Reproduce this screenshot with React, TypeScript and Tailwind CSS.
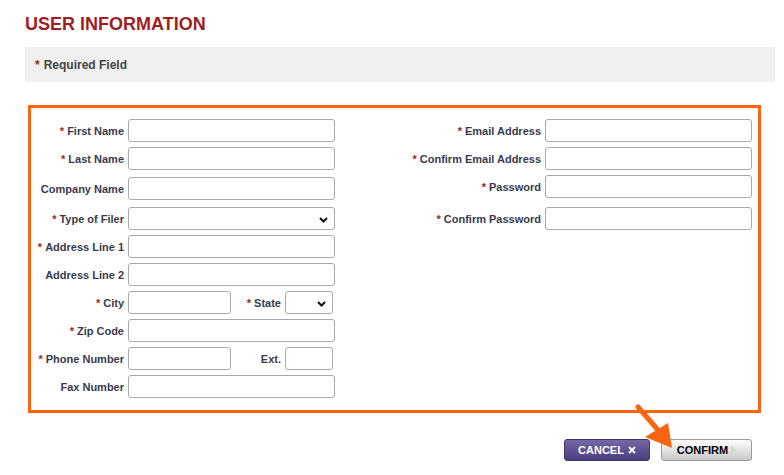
import React from "react"

const inputCls = "h-[23px] border border-[#a9a9a9] rounded-[3px] bg-white"

function Star() {
  return <span className="text-[#a31c22] mr-[3px]">*</span>
}

function Label({ text, req, w }: { text: string; req?: boolean; w: string }) {
  return (
    <div className={`${w} pr-[4px] text-right text-[11px] font-bold text-[#3a3a4c] leading-[14px] whitespace-nowrap`}>
      {req && <Star />}
      {text}
    </div>
  )
}

function Chevron() {
  return (
    <svg className="absolute right-[6px] top-[9px]" width="9" height="6" viewBox="0 0 9 6">
      <path d="M1 1 L4.5 4.5 L8 1" stroke="#111" strokeWidth="2" fill="none" />
    </svg>
  )
}

function Select({ w }: { w: string }) {
  return (
    <div className={`relative ${w} ${inputCls}`}>
      <Chevron />
    </div>
  )
}

function Row({ label, req, mt, children }: { label: string; req?: boolean; mt: string; children?: React.ReactNode }) {
  return (
    <div className={`flex items-center ${mt}`}>
      <Label text={label} req={req} w="w-[97px]" />
      {children ?? <input className={`w-[207px] ${inputCls}`} />}
    </div>
  )
}

function RightRow({ label, mt }: { label: string; mt: string }) {
  return (
    <div className={`flex items-center ${mt}`}>
      <Label text={label} req w="w-[155px]" />
      <input className={`w-[207px] ${inputCls}`} />
    </div>
  )
}

export default function App() {
  return (
    <div className="relative w-[784px] h-[475px] bg-white pl-[25px] pt-[13px]" style={{ fontFamily: '"Liberation Sans", Arial, sans-serif' }}>
      <h1 className="text-[18px] leading-[22px] font-bold text-[#a31c22]">USER INFORMATION</h1>

      <div className="mt-[12px] w-[750px] h-[35px] bg-[#f0f0f0] flex items-center pl-[10px] text-[12px] font-bold text-[#444]">
        <span className="text-[#a31c22] mr-[4px]">*</span>
        Required Field
      </div>

      <div className="ml-[3px] mt-[23px] w-[733px] h-[308px] border-[3px] border-[#fd6411] flex pt-[11px]">
        {/* Left column */}
        <div className="w-[359px]">
          <Row label="First Name" req mt="mt-0" />
          <Row label="Last Name" req mt="mt-[5px]" />
          <Row label="Company Name" mt="mt-[7px]" />
          <Row label="Type of Filer" req mt="mt-[7px]">
            <Select w="w-[207px]" />
          </Row>
          <Row label="Address Line 1" req mt="mt-[5px]" />
          <Row label="Address Line 2" mt="mt-[5px]" />
          <Row label="City" req mt="mt-[5px]">
            <input className={`w-[103px] ${inputCls}`} />
            <Label text="State" req w="w-[54px]" />
            <Select w="w-[48px]" />
          </Row>
          <Row label="Zip Code" req mt="mt-[5px]" />
          <Row label="Phone Number" req mt="mt-[5px]">
            <input className={`w-[103px] ${inputCls}`} />
            <Label text="Ext." w="w-[54px]" />
            <input className={`w-[48px] ${inputCls}`} />
          </Row>
          <Row label="Fax Number" mt="mt-[5px]" />
        </div>

        {/* Right column */}
        <div className="w-[362px]">
          <RightRow label="Email Address" mt="mt-0" />
          <RightRow label="Confirm Email Address" mt="mt-[5px]" />
          <RightRow label="Password" mt="mt-[5px]" />
          <RightRow label="Confirm Password" mt="mt-[9px]" />
        </div>
      </div>

      <div className="mt-[26px] w-[727px] flex justify-end gap-[11px]">
        <button className="w-[86px] h-[22px] rounded-[3px] border border-[#3e3468] bg-gradient-to-b from-[#7468a8] to-[#4a3e7c] text-white text-[11px] font-bold flex items-center justify-center gap-[4px]">
          CANCEL
          <svg width="8" height="8" viewBox="0 0 8 8">
            <path d="M1 1 L7 7 M7 1 L1 7" stroke="#fff" strokeWidth="2" />
          </svg>
        </button>
        <button className="w-[91px] h-[22px] rounded-[3px] border border-[#9a9a9a] bg-gradient-to-b from-[#ffffff] to-[#c9c9c9] text-black text-[11px] font-bold flex items-center justify-center gap-[3px]">
          CONFIRM
          <svg width="5" height="8" viewBox="0 0 5 8">
            <path d="M0 0 L5 4 L0 8 Z" fill="#d4d4d4" />
          </svg>
        </button>
      </div>

      {/* Pointer arrow */}
      <svg className="absolute left-[630px] top-[400px]" width="50" height="52" viewBox="0 0 50 52">
        <path d="M8 7 L28 30" stroke="#fd6411" strokeWidth="5" strokeLinecap="round" />
        <path d="M15 37 L38 23 L42 48 Z" fill="#fd6411" />
      </svg>
    </div>
  )
}
